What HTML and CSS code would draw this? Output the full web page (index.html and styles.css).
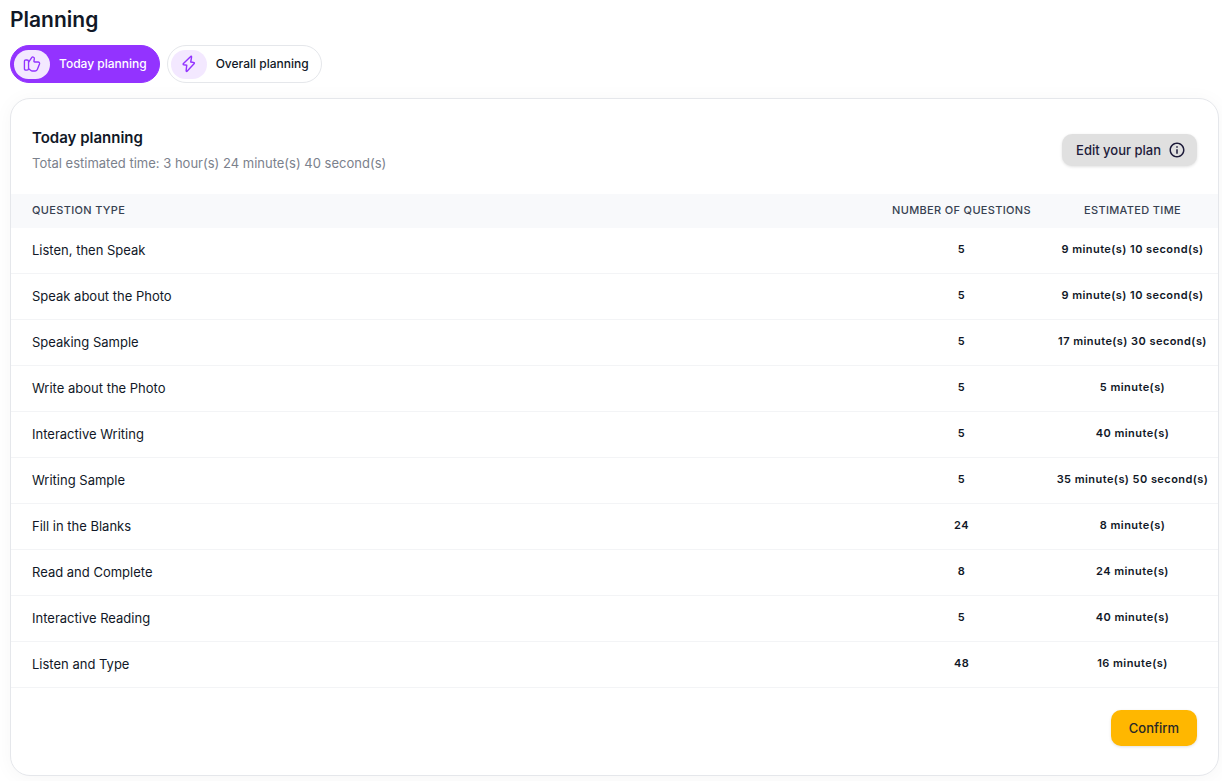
FILE: index.html
```html
<!DOCTYPE html>
<html lang="en">
<head>
<meta charset="utf-8">
<title>Planning</title>
<link rel="stylesheet" href="styles.css">
</head>
<body>
<main class="page">
  <h1 class="page-title">Planning</h1>
  <nav class="tabs">
    <button class="tab tab-active" type="button">
      <span class="tab-icon"><svg width="18" height="18" viewBox="0 0 24 24" fill="none" stroke="currentColor" stroke-width="1.8" stroke-linecap="round" stroke-linejoin="round" aria-hidden="true"><path d="M7.500 18.300l3.100 2.400c.4.400 1.300.6 1.900.6h3.800c1.200 0 2.500-.9 2.800-2.100l2.900-7.300c.5-1.400-.4-2.600-1.900-2.600h-4.500c-.6 0-1.100-.5-1-1.200l.5-3.200c.2-.9-.4-1.900-1.300-2.200-.8-.3-1.800.1-2.200.7L7.500 9.500"/><path d="M1.900 18.300V8.600c0-1.400.6-1.900 2-1.900h1.500c1.400 0 2 .5 2 1.900v9.700c0 1.400-.6 1.900-2 1.900H3.900c-1.400 0-2-.5-2-1.900z"/></svg></span>
      <span>Today planning</span>
    </button>
    <button class="tab" type="button">
      <span class="tab-icon"><svg width="18" height="18" viewBox="0 0 24 24" fill="none" stroke="currentColor" stroke-width="1.9" stroke-linecap="round" stroke-linejoin="round" aria-hidden="true"><path d="M13.900 2.200L4.600 11.400c-.8.800-.5 1.600.5 1.700l3.900.6-.8 7c-.1 1.300.7 1.600 1.500.6l9-9.600c.8-.9.500-1.600-.5-1.700l-3.900-.6 1.100-6.700c.2-1.200-.7-1.400-1.500-.5z"/></svg></span>
      <span>Overall planning</span>
    </button>
  </nav>
  <section class="card">
    <header class="card-header">
      <div>
        <h2 class="card-title">Today planning</h2>
        <p class="card-subtitle">Total estimated time: 3 hour(s) 24 minute(s) 40 second(s)</p>
      </div>
      <button class="button button-edit" type="button">Edit your plan
        <svg width="18" height="18" viewBox="0 0 24 24" fill="currentColor" aria-hidden="true"><path d="M11 7h2v2h-2zm0 4h2v6h-2zm1-9C6.480 2 2 6.480 2 12s4.480 10 10 10 10-4.480 10-10S17.520 2 12 2zm0 18c-4.410 0-8-3.590-8-8s3.590-8 8-8 8 3.590 8 8-3.590 8-8 8z"/></svg>
      </button>
    </header>
    <table class="plan">
      <thead>
        <tr><th class="type" scope="col">Question type</th><th class="metric" scope="col">Number of questions</th><th class="metric" scope="col">Estimated time</th></tr>
      </thead>
      <tbody>
        <tr><td class="type">Listen, then Speak</td><td class="metric">5</td><td class="metric">9 minute(s) 10 second(s)</td></tr>
        <tr><td class="type">Speak about the Photo</td><td class="metric">5</td><td class="metric">9 minute(s) 10 second(s)</td></tr>
        <tr><td class="type">Speaking Sample</td><td class="metric">5</td><td class="metric">17 minute(s) 30 second(s)</td></tr>
        <tr><td class="type">Write about the Photo</td><td class="metric">5</td><td class="metric">5 minute(s)</td></tr>
        <tr><td class="type">Interactive Writing</td><td class="metric">5</td><td class="metric">40 minute(s)</td></tr>
        <tr><td class="type">Writing Sample</td><td class="metric">5</td><td class="metric">35 minute(s) 50 second(s)</td></tr>
        <tr><td class="type">Fill in the Blanks</td><td class="metric">24</td><td class="metric">8 minute(s)</td></tr>
        <tr><td class="type">Read and Complete</td><td class="metric">8</td><td class="metric">24 minute(s)</td></tr>
        <tr><td class="type">Interactive Reading</td><td class="metric">5</td><td class="metric">40 minute(s)</td></tr>
        <tr><td class="type">Listen and Type</td><td class="metric">48</td><td class="metric">16 minute(s)</td></tr>
      </tbody>
    </table>
    <footer class="card-footer">
      <button class="button button-confirm" type="button">Confirm</button>
    </footer>
  </section>
</main>
</body>
</html>
```
FILE: styles.css
```css
* { box-sizing: border-box; }
body {
  margin: 0;
  background: #fff;
  color: #111827;
  font-family: Inter, "Liberation Sans", sans-serif;
  font-size: 13px;
  line-height: 20px;
}
h1, h2, p { margin: 0; }
button { font: inherit; color: inherit; cursor: pointer; }
.page { padding: 6px 3px 5px 10px; }
.page-title {
  margin-bottom: 11px;
  font-size: 21px;
  font-weight: 600;
  line-height: 28px;
}
.tabs { display: flex; gap: 7px; margin-bottom: 15px; }
.tab {
  display: flex;
  align-items: center;
  gap: 9px;
  height: 38px;
  padding: 0 12px 0 3px;
  border: 1px solid #e5e7eb;
  border-radius: 20px;
  background: #fff;
  font-size: 12px;
  font-weight: 500;
}
.tab-active {
  border-color: #9333ff;
  background: #9333ff;
  color: #fff;
}
.tab-icon {
  display: flex;
  align-items: center;
  justify-content: center;
  width: 36px;
  height: 29px;
  border-radius: 15px;
  background: #f3e8ff;
  color: #9333ff;
}
.card {
  overflow: hidden;
  border: 1px solid #e5e7eb;
  border-radius: 20px;
  background: #fff;
  box-shadow: 0 2px 20px rgba(0, 0, 0, 0.04);
}
.card-header {
  display: flex;
  align-items: center;
  justify-content: space-between;
  padding: 27px 21px 21px;
}
.card-title {
  margin-bottom: 3px;
  font-size: 15px;
  font-weight: 600;
  line-height: 24px;
}
.card-subtitle { color: #7b818c; }
.button {
  display: flex;
  align-items: center;
  border: 0;
  border-radius: 10px;
  box-shadow: 0 1px 3px rgba(0, 0, 0, 0.12);
  font-weight: 500;
}
.button-edit {
  gap: 7px;
  height: 32px;
  padding: 0 11px 0 14px;
  background: #e0e0e0;
  color: #1d1b3a;
}
.button-confirm {
  height: 36px;
  padding: 0 18px;
  background: #ffb700;
  color: #272727;
}
.plan { width: 100%; border-collapse: separate; border-spacing: 0; }
.plan th {
  height: 34px;
  padding: 0 0 2px;
  background: #f8f9fb;
  color: #374151;
  font-size: 11px;
  font-weight: 500;
  letter-spacing: 0.03em;
  line-height: 16px;
  text-transform: uppercase;
}
.plan td {
  height: 46px;
  padding: 0 0 1px;
  border-bottom: 1px solid #f3f4f6;
}
.plan .type { padding-left: 21px; text-align: left; }
.plan .metric { width: 171px; text-align: center; white-space: nowrap; }
.plan td.metric {
  padding-bottom: 3px;
  font-size: 11px;
  font-weight: 600;
  letter-spacing: 0.04em;
  line-height: 16px;
}
.card-footer { display: flex; justify-content: flex-end; padding: 22px 21px 29px; }
```
